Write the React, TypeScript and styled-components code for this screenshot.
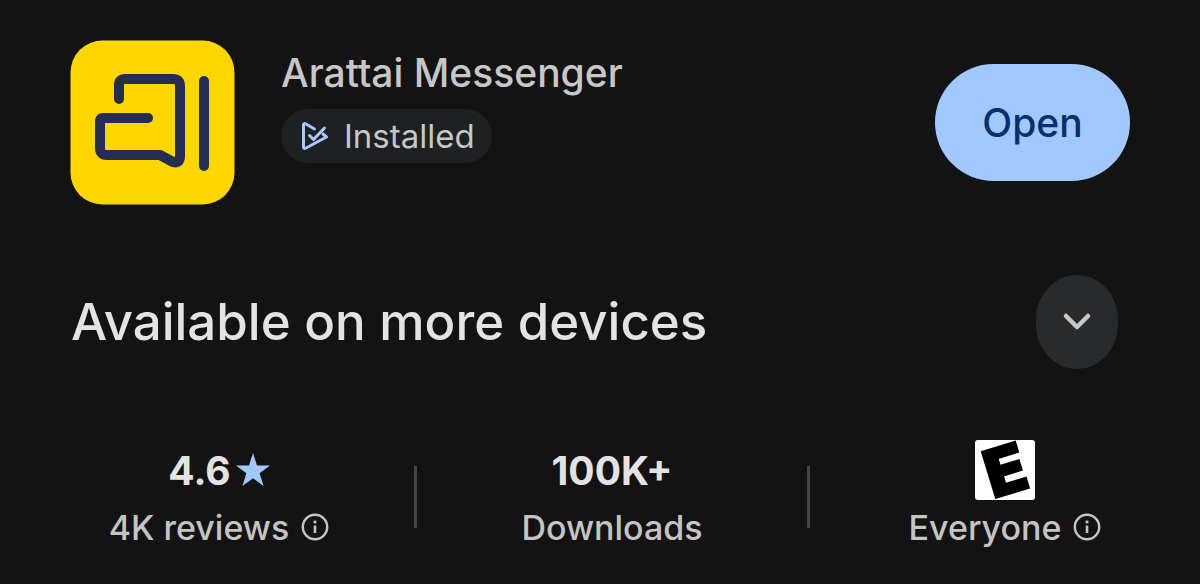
import React from "react";
import styled, { createGlobalStyle } from "styled-components";

const GlobalStyle = createGlobalStyle`
  *, *::before, *::after { box-sizing: border-box; }
  body {
    margin: 0;
    background: #131313;
    color: #e3e3e3;
    font-family: "Google Sans", Inter, Roboto, sans-serif;
  }
`;

const Page = styled.main`
  min-height: 100vh;
  padding-top: 40px;
`;

const Header = styled.header`
  display: flex;
  align-items: flex-start;
  gap: 46px;
  padding: 0 70px;
`;

const AppIcon = styled.svg`
  flex: none;
  width: 165px;
  height: 165px;
`;

const Details = styled.div`
  flex: 1;
  display: flex;
  flex-direction: column;
  align-items: flex-start;
  gap: 12px;
  padding-top: 8px;
`;

const AppName = styled.h1`
  margin: 0;
  font-size: 39px;
  line-height: 49px;
  font-weight: 500;
  color: #c7c7c7;
`;

const Chip = styled.div`
  display: flex;
  align-items: center;
  gap: 15px;
  height: 54px;
  padding: 0 17px 0 20px;
  border-radius: 27px;
  background: #1e2021;
  font-size: 33px;
  color: #c4c7c5;
`;

const ChipIcon = styled.svg`
  width: 28px;
  height: 30px;
`;

const OpenButton = styled.button`
  flex: none;
  width: 195px;
  height: 117px;
  margin-top: 24px;
  border: 0;
  border-radius: 59px;
  background: #a1c9ff;
  color: #04316c;
  font: inherit;
  font-size: 39px;
  font-weight: 500;
`;

const Devices = styled.section`
  display: flex;
  align-items: center;
  justify-content: space-between;
  padding: 70px 82px 0 71px;
`;

const DevicesTitle = styled.h2`
  margin: 0;
  font-size: 51px;
  line-height: 60px;
  font-weight: 500;
`;

const ExpandButton = styled.button`
  display: flex;
  align-items: center;
  justify-content: center;
  width: 82px;
  height: 94px;
  padding: 0;
  border: 0;
  border-radius: 41px / 44px;
  background: #282a2c;
`;

const Stats = styled.section`
  display: flex;
  align-items: center;
  padding: 71px 0 0 24px;
`;

const Stat = styled.div`
  flex: 1 1 0;
  display: flex;
  flex-direction: column;
  align-items: center;
`;

const StatValue = styled.div`
  display: flex;
  align-items: center;
  gap: 5px;
  height: 60px;
  font-size: 39px;
  font-weight: 700;
`;

const StatLabel = styled.div`
  display: flex;
  align-items: center;
  gap: 12px;
  height: 54px;
  font-size: 34px;
  font-weight: 500;
  color: #c4c4c4;
`;

const Divider = styled.div`
  width: 3px;
  height: 62px;
  background: #444746;
`;

const RatingBadge = styled.div`
  display: flex;
  align-items: center;
  justify-content: center;
  width: 60px;
  height: 60px;
  border-radius: 3px;
  background: #fff;
  color: #000;
`;

const RatingLetter = styled.span`
  font-size: 66px;
  line-height: 80px;
  font-weight: 900;
  -webkit-text-stroke: 2px #000;
  transform: rotate(-17deg);
`;

const InfoButton = styled.button`
  display: flex;
  padding: 0;
  border: 0;
  background: none;
  color: inherit;
`;

function Info({ label }: { label: string }) {
  return (
    <InfoButton type="button" aria-label={label}>
      <svg width="28" height="28" viewBox="0 0 28 28" fill="none" stroke="currentColor">
        <circle cx="14" cy="14" r="12.2" strokeWidth="2.4" />
        <path d="M14 12.5V20" strokeWidth="2.6" />
        <path d="M14 7.6v2.8" strokeWidth="2.8" />
      </svg>
    </InfoButton>
  );
}

export default function App() {
  return (
    <>
      <GlobalStyle />
      <Page>
        <Header>
          <AppIcon viewBox="0 0 165 165" role="img" aria-label="Arattai">
            <rect x="0.5" y="0.5" width="164" height="164" rx="32" fill="#ffd600" />
            <g fill="none" stroke="#252d50" strokeWidth="10" strokeLinecap="round" strokeLinejoin="round">
              <path d="M49 59V45q0-6 6-6h48q7 0 7 7v70q0 8-7 6l-13-7H37q-7 0-7-7V81q0-3 3-3h45" />
              <path d="M134 41v85" />
            </g>
          </AppIcon>
          <Details>
            <AppName>Arattai Messenger</AppName>
            <Chip>
              <ChipIcon viewBox="0 0 28 30" fill="none" stroke="#a8c7fa" strokeWidth="3" strokeLinecap="round" strokeLinejoin="round">
                <path d="M13.500 8 4.500 2.800Q2.500 2 2.500 4v22q0 2 2 1.200L25.500 16 22 13" />
                <path d="M8.500 14.500l4 4L23.500 7" />
              </ChipIcon>
              Installed
            </Chip>
          </Details>
          <OpenButton type="button">Open</OpenButton>
        </Header>

        <Devices>
          <DevicesTitle>Available on more devices</DevicesTitle>
          <ExpandButton type="button" aria-label="Show more devices">
            <svg width="30" height="20" viewBox="0 0 30 20" fill="none" stroke="#c7c7c7" strokeWidth="4.500" strokeLinecap="round" strokeLinejoin="round">
              <path d="M4 4l11 11L26 4" />
            </svg>
          </ExpandButton>
        </Devices>

        <Stats>
          <Stat>
            <StatValue>
              4.6
              <svg width="34" height="34" viewBox="0 0 34 34" fill="#a1c9ff" aria-hidden="true">
                <path d="M17 0l4 12.500h13L23.600 20.300 27.600 33 17 25.200 6.400 33l4-12.700L0 12.500h13z" />
              </svg>
            </StatValue>
            <StatLabel>
              4K reviews
              <Info label="About reviews" />
            </StatLabel>
          </Stat>
          <Divider />
          <Stat>
            <StatValue>100K+</StatValue>
            <StatLabel>Downloads</StatLabel>
          </Stat>
          <Divider />
          <Stat>
            <RatingBadge>
              <RatingLetter>E</RatingLetter>
            </RatingBadge>
            <StatLabel>
              Everyone
              <Info label="About the content rating" />
            </StatLabel>
          </Stat>
        </Stats>
      </Page>
    </>
  );
}
